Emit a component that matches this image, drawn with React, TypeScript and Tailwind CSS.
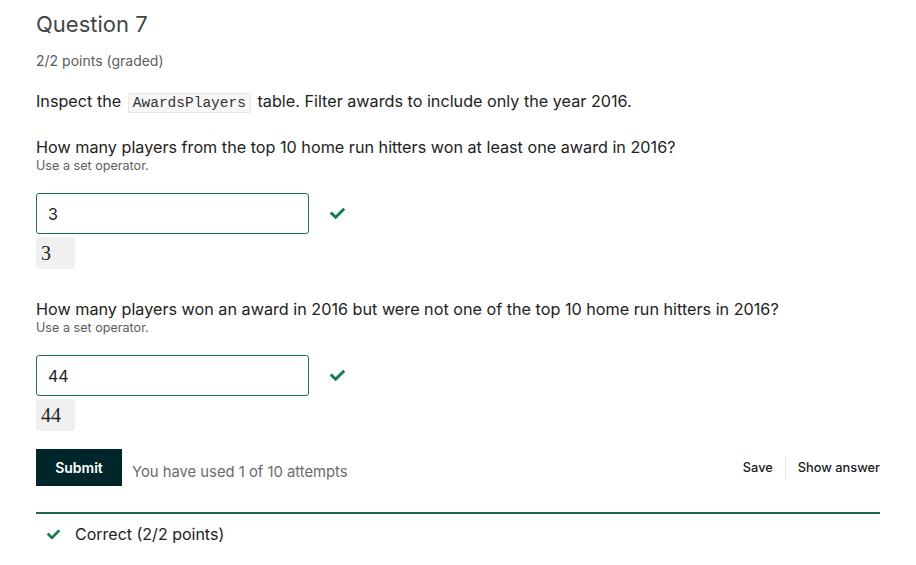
import React from 'react';

const Check: React.FC<{ className?: string }> = ({ className }) => (
  <svg viewBox="0 0 512 512" className={className} fill="currentColor">
    <path d="M173.9 439.4l-166.4-166.4c-10-10-10-26.2 0-36.2l36.2-36.2c10-10 26.2-10 36.2 0L192 312.7 432.1 72.6c10-10 26.2-10 36.2 0l36.2 36.2c10 10 10 26.2 0 36.2L210.1 439.4c-10 10-26.2 10-36.2 0z" />
  </svg>
);

type Part = { prompt: string; value: string };

const parts: Part[] = [
  { prompt: 'How many players from the top 10 home run hitters won at least one award in 2016?', value: '3' },
  { prompt: 'How many players won an award in 2016 but were not one of the top 10 home run hitters in 2016?', value: '44' },
];

const App: React.FC = () => {
  return (
    <div className="min-h-[565px] bg-white px-[36px] pt-[9px] font-['Inter','Liberation_Sans',sans-serif] text-[#313131]">
      {/* Header */}
      <h2 className="text-[22px] leading-[30px] text-[#454545]">Question 7</h2>
      <p className="mt-[12px] text-[14px] leading-[20px] text-[#5d5d5d]">2/2 points (graded)</p>

      <p className="mt-[18px] text-[16.2px] leading-[24px] text-[#222]">
        Inspect the{' '}
        <code className="mx-[2px] rounded-[2px] border border-[#e6e6e6] bg-[#f6f6f6] px-[4px] py-[1px] font-['Liberation_Mono','Courier_New',monospace] text-[14.5px] text-[#333]">
          AwardsPlayers
        </code>{' '}
        table. Filter awards to include only the year 2016.
      </p>

      {/* Parts */}
      {parts.map((p, i) => (
        <div key={i} className={i === 0 ? 'mt-[20px]' : 'mt-[28px]'}>
          <p className="text-[16.2px] leading-[24px] text-[#222]">{p.prompt}</p>
          <p className="-mt-[2px] text-[12.6px] leading-[18px] text-[#5d5d5d]">Use a set operator.</p>
          <div className="mt-[18px] flex items-center">
            <div className="flex h-[41px] w-[273px] items-center rounded-[3px] border border-[#1b7350] px-[11px] text-[16px] text-[#222]">
              {p.value}
            </div>
            <Check className="ml-[20px] h-[15px] w-[17px] text-[#157a4c]" />
          </div>
          <div className="mt-[3px] inline-flex h-[32px] min-w-[39px] items-center rounded-[3px] bg-[#f0f0f0] px-[5px] font-['Liberation_Serif',serif] text-[20px] text-[#222]">
            {p.value}
          </div>
        </div>
      ))}

      {/* Actions */}
      <div className="mt-[18px] flex items-center">
        <button className="h-[37px] w-[86px] bg-[#00262b] text-[14px] font-semibold text-white">Submit</button>
        <span className="ml-[10px] mt-[10px] text-[14.8px] text-[#6b6b6b]">You have used 1 of 10 attempts</span>
        <div className="ml-auto flex items-center text-[12.8px] font-medium text-[#1a1a1a]">
          <span>Save</span>
          <span className="mx-[12px] h-[24px] w-px bg-[#e4e4e4]" />
          <span>Show answer</span>
        </div>
      </div>

      {/* Result */}
      <div className="mt-[26px] border-t-2 border-[#1d6b4c] pt-[8px]">
        <div className="flex items-center pl-[10px] text-[16px] leading-[24px] text-[#222]">
          <Check className="h-[13px] w-[15px] text-[#157a4c]" />
          <span className="ml-[14px]">Correct (2/2 points)</span>
        </div>
      </div>
    </div>
  );
};

export default App;
